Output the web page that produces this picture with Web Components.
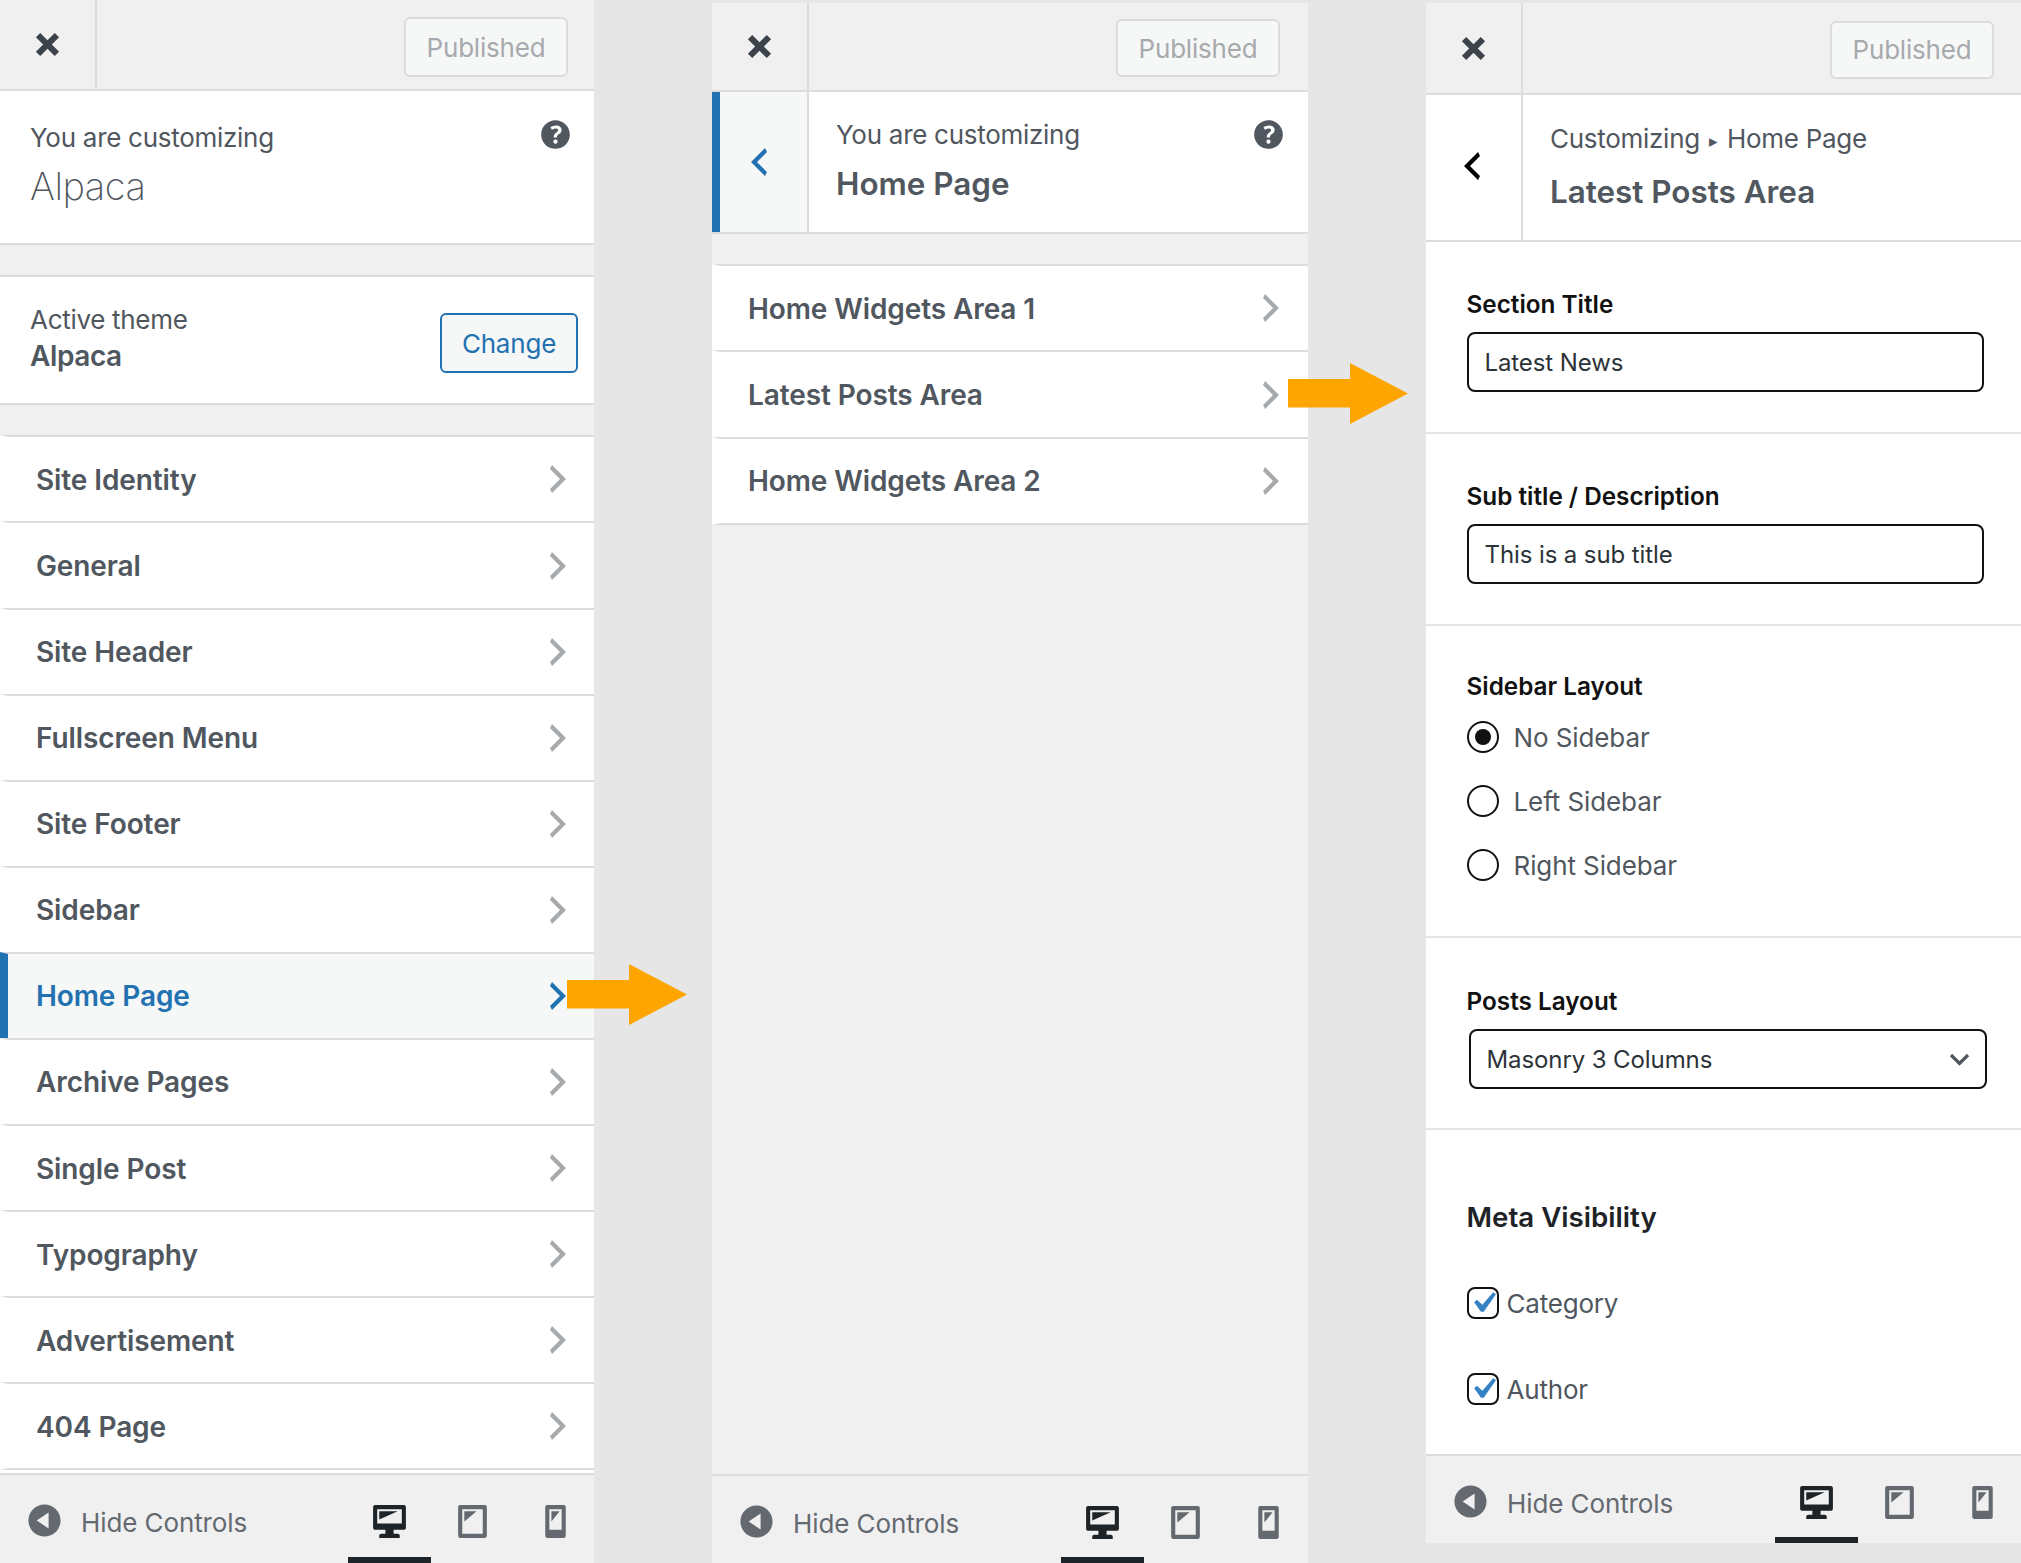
<!DOCTYPE html>
<html lang="en">
<head>
<meta charset="utf-8">
<title>Customizer panels</title>
<style>
  html, body { margin: 0; padding: 0; background: #e6e6e6; }
  body { width: 2021px; height: 1563px; overflow: hidden; font-family: Inter, "Liberation Sans", sans-serif; }
</style>
</head>
<body>
<cz-stage>
  <cz-panel style="width:594px;height:1563px">
    <cz-topbar style="--bar:89px;--btn-w:164px;--btn-h:60px;--btn-y:5px;--btn-r:26px"></cz-topbar>
    <cz-info small="You are customizing" name="Alpaca"></cz-info>
    <cz-theme name="Alpaca"></cz-theme>
    <cz-row first label="Site Identity"></cz-row>
    <cz-row label="General"></cz-row>
    <cz-row label="Site Header"></cz-row>
    <cz-row label="Fullscreen Menu"></cz-row>
    <cz-row label="Site Footer"></cz-row>
    <cz-row label="Sidebar"></cz-row>
    <cz-row active label="Home Page"></cz-row>
    <cz-row label="Archive Pages"></cz-row>
    <cz-row label="Single Post"></cz-row>
    <cz-row label="Typography"></cz-row>
    <cz-row label="Advertisement"></cz-row>
    <cz-row last label="404 Page"></cz-row>
    <cz-filler></cz-filler>
    <cz-footer style="--foot:88px"></cz-footer>
  </cz-panel>

  <cz-panel style="width:596px;height:1560px;margin-top:3px">
    <cz-topbar style="--bar:87px;--btn-w:164px;--btn-h:58px;--btn-y:3px;--btn-r:28px"></cz-topbar>
    <cz-nav active help small="You are customizing" heading="Home Page" style="--nav:140px;--pad:25px;--gap:7px"></cz-nav>
    <cz-row first label="Home Widgets Area 1" style="--row-r:17px"></cz-row>
    <cz-row label="Latest Posts Area" style="--row-r:17px"></cz-row>
    <cz-row last label="Home Widgets Area 2" style="--row-r:17px"></cz-row>
    <cz-footer style="--foot:87px;--dev-r:-2px;margin-top:auto"></cz-footer>
  </cz-panel>

  <cz-panel style="width:595px;height:1540px;margin-top:3px">
    <cz-topbar style="--bar:90px;--btn-w:164px;--btn-h:58px;--btn-y:3px;--btn-r:27px"></cz-topbar>
    <cz-nav dark small="Customizing▸Home Page" heading="Latest Posts Area" style="--nav:145px;--pad:26px;--gap:9px"></cz-nav>
    <cz-field label="Section Title" value="Latest News"></cz-field>
    <cz-field label="Sub title / Description" value="This is a sub title"></cz-field>
    <cz-radios label="Sidebar Layout" options="No Sidebar|Left Sidebar|Right Sidebar"></cz-radios>
    <cz-field select label="Posts Layout" value="Masonry 3 Columns"></cz-field>
    <cz-meta label="Meta Visibility" options="Category|Author"></cz-meta>
    <cz-footer style="--foot:87px"></cz-footer>
  </cz-panel>

  <cz-arrow style="left:567px;top:964px"></cz-arrow>
  <cz-arrow style="left:1288px;top:363px"></cz-arrow>
</cz-stage>

<script>
// dashicons, 20 unit box
const ICONS = {
  close: 'M12.12 10l3.53 3.53-2.12 2.12L10 12.12l-3.54 3.54-2.12-2.12L7.88 10 4.34 6.46l2.12-2.12L10 7.88l3.53-3.53 2.12 2.12z',
  help: 'M17 10c0-3.87-3.14-7-7-7-3.87 0-7 3.13-7 7 0 3.86 3.13 7 7 7 3.86 0 7-3.14 7-7zm-6.3 1.48H9.14v-.43c0-.38.08-.7.24-.98s.46-.57.88-.89c.41-.29.68-.53.81-.71.14-.18.2-.39.2-.62 0-.25-.09-.44-.28-.58-.19-.13-.45-.19-.79-.19-.58 0-1.25.19-2 .57l-.64-1.28c.87-.49 1.8-.74 2.77-.74.81 0 1.45.2 1.92.58.48.39.71.91.71 1.55 0 .43-.09.8-.29 1.11-.19.32-.57.67-1.11 1.06-.38.28-.61.49-.71.63-.1.15-.15.34-.15.57v.35zm-1.47 2.74c-.18-.18-.26-.43-.26-.75 0-.33.08-.58.26-.75.18-.17.44-.25.78-.25.33 0 .58.09.76.26.18.18.27.42.27.74 0 .3-.09.55-.27.72-.18.18-.43.27-.76.27-.34 0-.6-.09-.78-.24z',
  right: 'M6 15l5-5-5-5 1-2 7 7-7 7z',
  left: 'M14 5l-5 5 5 5-1 2-7-7 7-7z',
  collapse: 'M10 2.16c4.33 0 7.84 3.51 7.84 7.84s-3.51 7.84-7.84 7.84S2.16 14.33 2.16 10 5.71 2.16 10 2.16zm2 11.72V6.12L6.18 9.97z',
  desktop: 'M3 2h14c.55 0 1 .45 1 1v10c0 .55-.45 1-1 1h-5v2h2c.55 0 1 .45 1 1v1H5v-1c0-.55.45-1 1-1h2v-2H3c-.55 0-1-.45-1-1V3c0-.55.45-1 1-1zm13 9V4H4v7h12zM5 5h9L5 9V5z',
  tablet: 'M4 2h12c.55 0 1 .45 1 1v14c0 .55-.45 1-1 1H4c-.55 0-1-.45-1-1V3c0-.55.45-1 1-1zm11 14V4H5v12h10zM6 5h6l-6 5V5z',
  phone: 'M6 2h8c.55 0 1 .45 1 1v14c0 .55-.45 1-1 1H6c-.55 0-1-.45-1-1V3c0-.55.45-1 1-1zm7 12V4H7v10h6zM8 5h4l-4 5V5z',
  check: 'M14.83 4.89l1.34.94-5.81 8.38H9.02L5.78 9.67l1.34-1.25 2.57 2.4z'
};

function icon(name, size, color) {
  return `<svg width="${size}" height="${size}" viewBox="0 0 20 20" style="display:block;flex:none"><path fill="${color}" fill-rule="evenodd" d="${ICONS[name]}"/></svg>`;
}

const FONT = `font-family: Inter, "Liberation Sans", sans-serif;`;

class CzStage extends HTMLElement {
  constructor() {
    super();
    this.attachShadow({ mode: 'open' });
    this.shadowRoot.innerHTML = `
      <style>
        :host { display: flex; position: relative; align-items: flex-start; gap: 118px; width: 2021px; height: 1563px; overflow: hidden; }
      </style>
      <slot></slot>`;
  }
}

class CzPanel extends HTMLElement {
  constructor() {
    super();
    this.attachShadow({ mode: 'open' });
    this.shadowRoot.innerHTML = `
      <style>
        :host { display: flex; flex-direction: column; flex: none; background: #f0f0f1; overflow: hidden; ${FONT} }
      </style>
      <slot></slot>`;
  }
}

class CzTopbar extends HTMLElement {
  constructor() {
    super();
    this.attachShadow({ mode: 'open' });
    this.shadowRoot.innerHTML = `
      <style>
        :host { display: flex; flex: none; height: var(--bar); border-bottom: 2px solid #dcdcde; }
        .close { width: 95px; display: flex; align-items: center; justify-content: center; border-right: 2px solid #dcdcde; }
        .right { flex: 1; display: flex; justify-content: flex-end; align-items: center; padding: var(--btn-y) var(--btn-r) 0 0; }
        .btn { box-sizing: border-box; width: var(--btn-w); height: var(--btn-h); display: flex; align-items: center; justify-content: center;
          background: #f6f7f7; border: 2px solid #dcdcde; border-radius: 6px; color: #a7aaad; font-size: 26px; letter-spacing: -.2px; }
      </style>
      <div class="close">${icon('close', 41, '#3c434a')}</div>
      <div class="right"><div class="btn">Published</div></div>`;
  }
}

class CzInfo extends HTMLElement {
  connectedCallback() {
    this.attachShadow({ mode: 'open' });
    this.shadowRoot.innerHTML = `
      <style>
        :host { display: flex; flex: none; box-sizing: border-box; height: 154px; background: #fff; border-bottom: 2px solid #dcdcde; padding: 0 18px 0 30px; justify-content: space-between; }
        .small { font-size: 26px; line-height: 32px; color: #50575e; margin-top: 31px; letter-spacing: -.28px; }
        .name { font-size: 38px; font-weight: 200; line-height: 48px; color: #50575e; margin-top: 8px; letter-spacing: -.5px; }
        .help { margin-top: 23px; }
      </style>
      <div>
        <div class="small">${this.getAttribute('small')}</div>
        <div class="name">${this.getAttribute('name')}</div>
      </div>
      <div class="help">${icon('help', 41, '#50575e')}</div>`;
  }
}

class CzTheme extends HTMLElement {
  connectedCallback() {
    this.attachShadow({ mode: 'open' });
    this.shadowRoot.innerHTML = `
      <style>
        :host { display: flex; flex: none; box-sizing: border-box; height: 130px; margin-top: 30px; background: #fff; border-top: 2px solid #dcdcde; border-bottom: 2px solid #dcdcde;
          padding: 0 16px 0 30px; justify-content: space-between; align-items: flex-start; }
        .small { font-size: 26px; line-height: 36px; color: #50575e; margin-top: 25px; letter-spacing: -.3px; }
        .name { font-size: 28px; font-weight: 600; line-height: 36px; color: #50575e; letter-spacing: -.4px; }
        .btn { box-sizing: border-box; width: 138px; height: 60px; margin-top: 36px; display: flex; align-items: center; justify-content: center;
          background: #f6f7f7; border: 2px solid #2271b1; border-radius: 6px; color: #2271b1; font-size: 26px; letter-spacing: -.2px; }
      </style>
      <div>
        <div class="small">Active theme</div>
        <div class="name">${this.getAttribute('name')}</div>
      </div>
      <div class="btn">Change</div>`;
  }
}

class CzRow extends HTMLElement {
  connectedCallback() {
    const active = this.hasAttribute('active');
    this.attachShadow({ mode: 'open' });
    this.shadowRoot.innerHTML = `
      <style>
        :host { display: flex; flex: none; box-sizing: border-box; height: 86.08px; background: ${active ? '#f6f7f7' : '#fff'};
          border-top: 2px solid #dcdcde; border-left: 8px solid ${active ? '#2271b1' : '#fff'};
          padding: 1px var(--row-r, 16px) 0 28px; align-items: center; justify-content: space-between; }
        :host([last]) { height: 88px; border-bottom: 2px solid #dcdcde; }
        :host([first]) { margin-top: 30.4px; }
        .label { font-size: 28px; font-weight: 600; letter-spacing: -.1px; color: ${active ? '#2271b1' : '#50575e'}; }
        svg { margin-top: -1px; }
      </style>
      <div class="label">${this.getAttribute('label')}</div>
      ${icon('right', 40, active ? '#2271b1' : '#a7aaad')}`;
  }
}

class CzFiller extends HTMLElement {
  constructor() {
    super();
    this.attachShadow({ mode: 'open' });
    this.shadowRoot.innerHTML = `<style>:host { display: block; flex: 1; background: #fff; }</style>`;
  }
}

class CzNav extends HTMLElement {
  connectedCallback() {
    const active = this.hasAttribute('active');
    const chevron = active ? '#2271b1' : '#000';
    const small = this.getAttribute('small').replace('▸', '<span class="sep">▸</span>');
    this.attachShadow({ mode: 'open' });
    this.shadowRoot.innerHTML = `
      <style>
        :host { display: flex; flex: none; height: var(--nav); background: #fff; border-bottom: 2px solid #dcdcde; }
        .back { box-sizing: border-box; width: 95px; flex: none; display: flex; align-items: center; justify-content: center;
          padding: ${active ? '0 10px 0 0' : '0 4px 3px 0'}; background: ${active ? '#f6f7f7' : '#fff'}; border-left: ${active ? '8px solid #2271b1' : '0'}; }
        .line { width: 2px; flex: none; background: #dcdcde; }
        .text { flex: 1; padding: var(--pad) 0 0 27px; }
        .small { font-size: 26px; line-height: 36px; color: #50575e; letter-spacing: -.28px; }
        .sep { display: inline-block; width: 27px; text-align: center; font-size: 17px; vertical-align: 1px; letter-spacing: 0; }
        .title { font-size: 31.4px; font-weight: 600; line-height: 48px; margin-top: var(--gap); color: #50575e; }
        .help { padding: 22px 19px 0 0; }
      </style>
      <div class="back">${icon('left', 40, chevron)}</div>
      <div class="line"></div>
      <div class="text">
        <div class="small">${small}</div>
        <div class="title">${this.getAttribute('heading')}</div>
      </div>
      ${this.hasAttribute('help') ? `<div class="help">${icon('help', 41, '#50575e')}</div>` : ''}`;
  }
}

const SECTION = `
  :host { display: block; flex: none; box-sizing: border-box; background: #fff; border-bottom: 2px solid #e5e5e5; padding-left: 40.5px; }
  .label { font-size: 24.3px; font-weight: 600; line-height: 32px; color: #111; }
`;

class CzField extends HTMLElement {
  connectedCallback() {
    const isSelect = this.hasAttribute('select');
    this.attachShadow({ mode: 'open' });
    this.shadowRoot.innerHTML = `
      <style>
        ${SECTION}
        :host { height: 192px; padding-top: ${isSelect ? 47 : 46}px; }
        .box { box-sizing: border-box; width: ${isSelect ? 518 : 517}px; height: 60px; margin: 12px 0 0 ${isSelect ? 2 : 0}px; padding: 0 15px 0 16px; border: 2px solid #111; border-radius: 8px;
          display: flex; align-items: center; justify-content: space-between; font-size: 24px; color: #2c3338; letter-spacing: -.1px; }
      </style>
      <div class="label">${this.getAttribute('label')}</div>
      <div class="box">
        <span>${this.getAttribute('value')}</span>
        ${isSelect ? `<svg width="21" height="13" viewBox="0 0 21 13"><path d="M2 2l8.500 8.500L19 2" fill="none" stroke="#50575e" stroke-width="3.2"/></svg>` : ''}
      </div>`;
  }
}

class CzRadios extends HTMLElement {
  connectedCallback() {
    const options = this.getAttribute('options').split('|');
    this.attachShadow({ mode: 'open' });
    this.shadowRoot.innerHTML = `
      <style>
        ${SECTION}
        :host { height: 312px; padding-top: 44px; }
        .opt { display: flex; align-items: center; gap: 15px; height: 64px; font-size: 26px; color: #50575e; letter-spacing: -.1px; }
        .opts { margin-top: 3px; }
        .dot { box-sizing: border-box; width: 32px; height: 32px; flex: none; border: 2px solid #111; border-radius: 50%; display: flex; align-items: center; justify-content: center; }
        .dot i { display: block; width: 16px; height: 16px; border-radius: 50%; background: #111; }
      </style>
      <div class="label">${this.getAttribute('label')}</div>
      <div class="opts">
        ${options.map((o, i) => `<div class="opt"><span class="dot">${i === 0 ? '<i></i>' : ''}</span><span>${o}</span></div>`).join('')}
      </div>`;
  }
}

class CzMeta extends HTMLElement {
  connectedCallback() {
    const options = this.getAttribute('options').split('|');
    this.attachShadow({ mode: 'open' });
    this.shadowRoot.innerHTML = `
      <style>
        ${SECTION}
        :host { flex: 1; border-bottom: 0; padding-top: 65px; }
        .title { font-size: 27.7px; font-weight: 600; line-height: 44px; color: #1d2327; }
        .opts { margin-top: 48px; display: flex; flex-direction: column; gap: 54px; }
        .opt { display: flex; align-items: center; gap: 8px; height: 32px; font-size: 26px; color: #50575e; letter-spacing: -.2px; }
        .box { box-sizing: border-box; width: 32px; height: 32px; flex: none; border: 2px solid #111; border-radius: 8px; display: flex; align-items: center; justify-content: center; }
      </style>
      <div class="title">${this.getAttribute('label')}</div>
      <div class="opts">
        ${options.map(o => `<div class="opt"><span class="box">${icon('check', 42, '#3582c4')}</span><span>${o}</span></div>`).join('')}
      </div>`;
  }
}

class CzFooter extends HTMLElement {
  constructor() {
    super();
    this.attachShadow({ mode: 'open' });
    this.shadowRoot.innerHTML = `
      <style>
        :host { display: flex; flex: none; box-sizing: content-box; height: var(--foot); border-top: 2px solid #dcdcde; background: #f0f0f1; }
        .hide { flex: 1; display: flex; align-items: flex-start; padding: 25px 0 0 24px; gap: 16px; color: #646970; font-size: 26px; line-height: 45px; letter-spacing: -.1px; }
        .dev { box-sizing: border-box; width: 83px; flex: none; display: flex; justify-content: center; padding-top: 26px; border-bottom: 6px solid transparent; }
        .dev.on { border-bottom-color: #1d2327; }
        .devs { display: flex; margin-right: var(--dev-r, -3px); }
      </style>
      <div class="hide">${icon('collapse', 41, '#646970')}<span>Hide Controls</span></div>
      <div class="devs">
        <div class="dev on">${icon('desktop', 41, '#1d2327')}</div>
        <div class="dev">${icon('tablet', 41, '#646970')}</div>
        <div class="dev">${icon('phone', 41, '#646970')}</div>
      </div>`;
  }
}

class CzArrow extends HTMLElement {
  constructor() {
    super();
    this.attachShadow({ mode: 'open' });
    this.shadowRoot.innerHTML = `
      <style>:host { display: block; position: absolute; width: 120px; height: 61px; }</style>
      <svg width="120" height="61" viewBox="0 0 120 61" style="display:block"><path fill="#ffa500" d="M0 16h62V0l58 30.500L62 61V44.500H0z"/></svg>`;
  }
}

customElements.define('cz-stage', CzStage);
customElements.define('cz-panel', CzPanel);
customElements.define('cz-topbar', CzTopbar);
customElements.define('cz-info', CzInfo);
customElements.define('cz-theme', CzTheme);
customElements.define('cz-row', CzRow);
customElements.define('cz-filler', CzFiller);
customElements.define('cz-nav', CzNav);
customElements.define('cz-field', CzField);
customElements.define('cz-radios', CzRadios);
customElements.define('cz-meta', CzMeta);
customElements.define('cz-footer', CzFooter);
customElements.define('cz-arrow', CzArrow);
</script>
</body>
</html>
